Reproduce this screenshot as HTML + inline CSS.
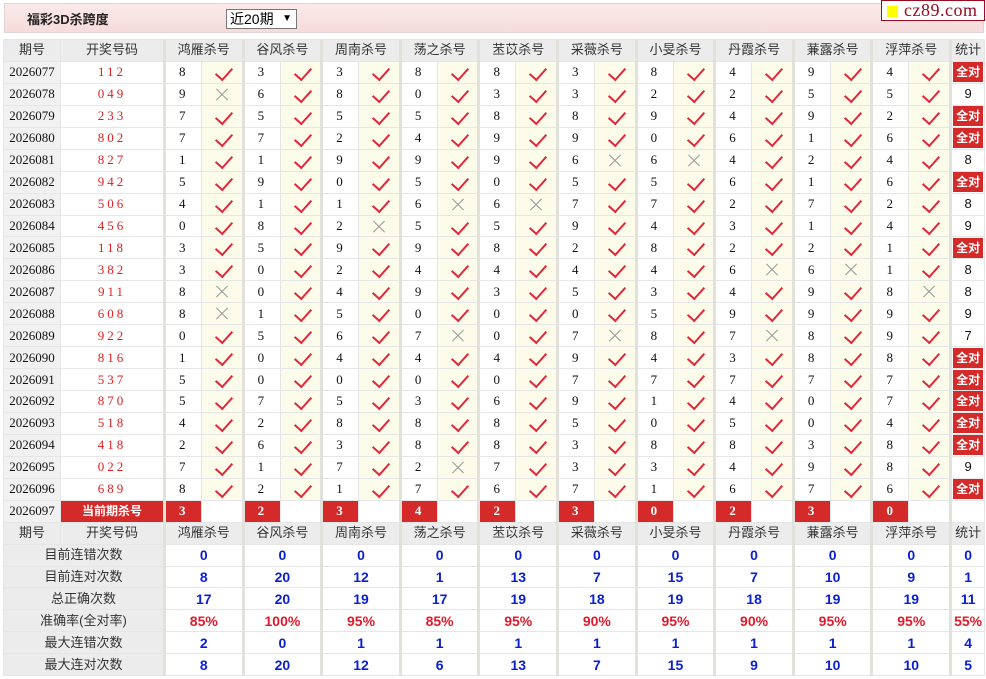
<!DOCTYPE html>
<html><head><meta charset="utf-8">
<style>
*{margin:0;padding:0;box-sizing:border-box}
body{width:986px;height:679px;background:#fff;font-family:"Liberation Sans","Noto Sans CJK SC",sans-serif;position:relative;overflow:hidden}
.top{position:absolute;left:4px;top:3px;width:980px;height:30px;background:linear-gradient(#fbe9e9,#f6dcdc);border:1px solid #e4d4d4}
.title{position:absolute;left:22px;top:5px;font-size:13px;font-weight:bold;color:#222}
.sel{position:absolute;left:221px;top:5px;width:71px;height:20px;border:1px solid #777;background:#fff;font-size:14px;padding-left:3px;line-height:18px;color:#000}
.sel span{position:absolute;right:4px;top:0;font-size:10px}
.logo{position:absolute;left:881px;top:0;width:104px;height:21px;border:1px solid #9a0a20;background:#fff;font-family:"Liberation Serif",serif;font-size:18px;color:#9a0a20;line-height:19px;padding-left:22px;letter-spacing:0.5px}
.logo i{position:absolute;left:5px;top:5px;width:11px;height:11px;background:#ffff00}
table{position:absolute;left:3px;top:39px;width:981px;border-collapse:collapse;table-layout:fixed}
tr{height:21.95px}
td{border:1px solid #e6e6e6;font-size:13px;text-align:center;vertical-align:middle;padding:0;color:#111;white-space:nowrap;overflow:hidden;line-height:16px}
tr.h td{background:#ececec;color:#333}
td.q{background:#f1f1f1;font-family:"Liberation Serif",serif;font-size:13px}
td.d{color:#e02020;font-family:"Liberation Serif",serif;letter-spacing:3px}
td.n{font-family:"Liberation Serif",serif;text-align:left;padding-left:13px;border-left:3px solid #e3e1dc}
td.g{border-left:3px solid #e3e1dc}
td.t{border-left:3px solid #e3e1dc}
td.y,td.x,td.w{background:#fdfbea;position:relative}
td.w{background:#fff}
td.y::after{content:"";position:absolute;left:17px;top:2px;width:8px;height:14px;border-right:2px solid #e0283a;border-bottom:2px solid #e0283a;transform:rotate(42deg)}
td.x::before,td.x::after{content:"";position:absolute;left:12px;top:10px;width:16px;height:1px;background:#999;transform:rotate(45deg)}
td.x::after{transform:rotate(-45deg)}
td.t b{display:block;background:#d42a2a;color:#fff;font-size:12px;height:20px;line-height:20px;margin:0 1px}
td.r{background:#d42a2a;color:#fff;font-weight:bold;font-family:"Liberation Serif",serif;text-align:left;padding-left:13px;border-left:3px solid #e3e1dc}
td.cur{background:#d42a2a;color:#fff;font-weight:bold;font-size:12px}
td.l{background:#ececec;color:#333}
td.v{color:#0a1fd0;font-weight:bold;font-size:14px;border-left:3px solid #e3e1dc}
td.p{color:#e01a2a;font-weight:bold;font-size:14px;border-left:3px solid #e3e1dc}
</style></head><body>
<div class="top"><div class="title">福彩3D杀跨度</div><div class="sel">近20期<span>&#9660;</span></div></div>
<div class="logo"><i></i>cz89.com</div>
<table>
<colgroup><col style="width:57px"><col style="width:104px">
<col style="width:37px"><col style="width:41.6px"><col style="width:37px"><col style="width:41.6px"><col style="width:37px"><col style="width:41.6px"><col style="width:37px"><col style="width:41.6px"><col style="width:37px"><col style="width:41.6px"><col style="width:37px"><col style="width:41.6px"><col style="width:37px"><col style="width:41.6px"><col style="width:37px"><col style="width:41.6px"><col style="width:37px"><col style="width:41.6px"><col style="width:37px"><col style="width:41.6px">
<col style="width:34px"></colgroup>
<tr class="h"><td>期号</td><td>开奖号码</td><td colspan="2" class="g">鸿雁杀号</td><td colspan="2" class="g">谷风杀号</td><td colspan="2" class="g">周南杀号</td><td colspan="2" class="g">荡之杀号</td><td colspan="2" class="g">苤苡杀号</td><td colspan="2" class="g">采薇杀号</td><td colspan="2" class="g">小旻杀号</td><td colspan="2" class="g">丹霞杀号</td><td colspan="2" class="g">蒹露杀号</td><td colspan="2" class="g">浮萍杀号</td><td class="g">统计</td></tr>
<tr><td class="q">2026077</td><td class="d">112</td><td class="n">8</td><td class="y"></td><td class="n">3</td><td class="y"></td><td class="n">3</td><td class="y"></td><td class="n">8</td><td class="y"></td><td class="n">8</td><td class="y"></td><td class="n">3</td><td class="y"></td><td class="n">8</td><td class="y"></td><td class="n">4</td><td class="y"></td><td class="n">9</td><td class="y"></td><td class="n">4</td><td class="y"></td><td class="t"><b>全对</b></td></tr>
<tr><td class="q">2026078</td><td class="d">049</td><td class="n">9</td><td class="x"></td><td class="n">6</td><td class="y"></td><td class="n">8</td><td class="y"></td><td class="n">0</td><td class="y"></td><td class="n">3</td><td class="y"></td><td class="n">3</td><td class="y"></td><td class="n">2</td><td class="y"></td><td class="n">2</td><td class="y"></td><td class="n">5</td><td class="y"></td><td class="n">5</td><td class="y"></td><td class="t">9</td></tr>
<tr><td class="q">2026079</td><td class="d">233</td><td class="n">7</td><td class="y"></td><td class="n">5</td><td class="y"></td><td class="n">5</td><td class="y"></td><td class="n">5</td><td class="y"></td><td class="n">8</td><td class="y"></td><td class="n">8</td><td class="y"></td><td class="n">9</td><td class="y"></td><td class="n">4</td><td class="y"></td><td class="n">9</td><td class="y"></td><td class="n">2</td><td class="y"></td><td class="t"><b>全对</b></td></tr>
<tr><td class="q">2026080</td><td class="d">802</td><td class="n">7</td><td class="y"></td><td class="n">7</td><td class="y"></td><td class="n">2</td><td class="y"></td><td class="n">4</td><td class="y"></td><td class="n">9</td><td class="y"></td><td class="n">9</td><td class="y"></td><td class="n">0</td><td class="y"></td><td class="n">6</td><td class="y"></td><td class="n">1</td><td class="y"></td><td class="n">6</td><td class="y"></td><td class="t"><b>全对</b></td></tr>
<tr><td class="q">2026081</td><td class="d">827</td><td class="n">1</td><td class="y"></td><td class="n">1</td><td class="y"></td><td class="n">9</td><td class="y"></td><td class="n">9</td><td class="y"></td><td class="n">9</td><td class="y"></td><td class="n">6</td><td class="x"></td><td class="n">6</td><td class="x"></td><td class="n">4</td><td class="y"></td><td class="n">2</td><td class="y"></td><td class="n">4</td><td class="y"></td><td class="t">8</td></tr>
<tr><td class="q">2026082</td><td class="d">942</td><td class="n">5</td><td class="y"></td><td class="n">9</td><td class="y"></td><td class="n">0</td><td class="y"></td><td class="n">5</td><td class="y"></td><td class="n">0</td><td class="y"></td><td class="n">5</td><td class="y"></td><td class="n">5</td><td class="y"></td><td class="n">6</td><td class="y"></td><td class="n">1</td><td class="y"></td><td class="n">6</td><td class="y"></td><td class="t"><b>全对</b></td></tr>
<tr><td class="q">2026083</td><td class="d">506</td><td class="n">4</td><td class="y"></td><td class="n">1</td><td class="y"></td><td class="n">1</td><td class="y"></td><td class="n">6</td><td class="x"></td><td class="n">6</td><td class="x"></td><td class="n">7</td><td class="y"></td><td class="n">7</td><td class="y"></td><td class="n">2</td><td class="y"></td><td class="n">7</td><td class="y"></td><td class="n">2</td><td class="y"></td><td class="t">8</td></tr>
<tr><td class="q">2026084</td><td class="d">456</td><td class="n">0</td><td class="y"></td><td class="n">8</td><td class="y"></td><td class="n">2</td><td class="x"></td><td class="n">5</td><td class="y"></td><td class="n">5</td><td class="y"></td><td class="n">9</td><td class="y"></td><td class="n">4</td><td class="y"></td><td class="n">3</td><td class="y"></td><td class="n">1</td><td class="y"></td><td class="n">4</td><td class="y"></td><td class="t">9</td></tr>
<tr><td class="q">2026085</td><td class="d">118</td><td class="n">3</td><td class="y"></td><td class="n">5</td><td class="y"></td><td class="n">9</td><td class="y"></td><td class="n">9</td><td class="y"></td><td class="n">8</td><td class="y"></td><td class="n">2</td><td class="y"></td><td class="n">8</td><td class="y"></td><td class="n">2</td><td class="y"></td><td class="n">2</td><td class="y"></td><td class="n">1</td><td class="y"></td><td class="t"><b>全对</b></td></tr>
<tr><td class="q">2026086</td><td class="d">382</td><td class="n">3</td><td class="y"></td><td class="n">0</td><td class="y"></td><td class="n">2</td><td class="y"></td><td class="n">4</td><td class="y"></td><td class="n">4</td><td class="y"></td><td class="n">4</td><td class="y"></td><td class="n">4</td><td class="y"></td><td class="n">6</td><td class="x"></td><td class="n">6</td><td class="x"></td><td class="n">1</td><td class="y"></td><td class="t">8</td></tr>
<tr><td class="q">2026087</td><td class="d">911</td><td class="n">8</td><td class="x"></td><td class="n">0</td><td class="y"></td><td class="n">4</td><td class="y"></td><td class="n">9</td><td class="y"></td><td class="n">3</td><td class="y"></td><td class="n">5</td><td class="y"></td><td class="n">3</td><td class="y"></td><td class="n">4</td><td class="y"></td><td class="n">9</td><td class="y"></td><td class="n">8</td><td class="x"></td><td class="t">8</td></tr>
<tr><td class="q">2026088</td><td class="d">608</td><td class="n">8</td><td class="x"></td><td class="n">1</td><td class="y"></td><td class="n">5</td><td class="y"></td><td class="n">0</td><td class="y"></td><td class="n">0</td><td class="y"></td><td class="n">0</td><td class="y"></td><td class="n">5</td><td class="y"></td><td class="n">9</td><td class="y"></td><td class="n">9</td><td class="y"></td><td class="n">9</td><td class="y"></td><td class="t">9</td></tr>
<tr><td class="q">2026089</td><td class="d">922</td><td class="n">0</td><td class="y"></td><td class="n">5</td><td class="y"></td><td class="n">6</td><td class="y"></td><td class="n">7</td><td class="x"></td><td class="n">0</td><td class="y"></td><td class="n">7</td><td class="x"></td><td class="n">8</td><td class="y"></td><td class="n">7</td><td class="x"></td><td class="n">8</td><td class="y"></td><td class="n">9</td><td class="y"></td><td class="t">7</td></tr>
<tr><td class="q">2026090</td><td class="d">816</td><td class="n">1</td><td class="y"></td><td class="n">0</td><td class="y"></td><td class="n">4</td><td class="y"></td><td class="n">4</td><td class="y"></td><td class="n">4</td><td class="y"></td><td class="n">9</td><td class="y"></td><td class="n">4</td><td class="y"></td><td class="n">3</td><td class="y"></td><td class="n">8</td><td class="y"></td><td class="n">8</td><td class="y"></td><td class="t"><b>全对</b></td></tr>
<tr><td class="q">2026091</td><td class="d">537</td><td class="n">5</td><td class="y"></td><td class="n">0</td><td class="y"></td><td class="n">0</td><td class="y"></td><td class="n">0</td><td class="y"></td><td class="n">0</td><td class="y"></td><td class="n">7</td><td class="y"></td><td class="n">7</td><td class="y"></td><td class="n">7</td><td class="y"></td><td class="n">7</td><td class="y"></td><td class="n">7</td><td class="y"></td><td class="t"><b>全对</b></td></tr>
<tr><td class="q">2026092</td><td class="d">870</td><td class="n">5</td><td class="y"></td><td class="n">7</td><td class="y"></td><td class="n">5</td><td class="y"></td><td class="n">3</td><td class="y"></td><td class="n">6</td><td class="y"></td><td class="n">9</td><td class="y"></td><td class="n">1</td><td class="y"></td><td class="n">4</td><td class="y"></td><td class="n">0</td><td class="y"></td><td class="n">7</td><td class="y"></td><td class="t"><b>全对</b></td></tr>
<tr><td class="q">2026093</td><td class="d">518</td><td class="n">4</td><td class="y"></td><td class="n">2</td><td class="y"></td><td class="n">8</td><td class="y"></td><td class="n">8</td><td class="y"></td><td class="n">8</td><td class="y"></td><td class="n">5</td><td class="y"></td><td class="n">0</td><td class="y"></td><td class="n">5</td><td class="y"></td><td class="n">0</td><td class="y"></td><td class="n">4</td><td class="y"></td><td class="t"><b>全对</b></td></tr>
<tr><td class="q">2026094</td><td class="d">418</td><td class="n">2</td><td class="y"></td><td class="n">6</td><td class="y"></td><td class="n">3</td><td class="y"></td><td class="n">8</td><td class="y"></td><td class="n">8</td><td class="y"></td><td class="n">3</td><td class="y"></td><td class="n">8</td><td class="y"></td><td class="n">8</td><td class="y"></td><td class="n">3</td><td class="y"></td><td class="n">8</td><td class="y"></td><td class="t"><b>全对</b></td></tr>
<tr><td class="q">2026095</td><td class="d">022</td><td class="n">7</td><td class="y"></td><td class="n">1</td><td class="y"></td><td class="n">7</td><td class="y"></td><td class="n">2</td><td class="x"></td><td class="n">7</td><td class="y"></td><td class="n">3</td><td class="y"></td><td class="n">3</td><td class="y"></td><td class="n">4</td><td class="y"></td><td class="n">9</td><td class="y"></td><td class="n">8</td><td class="y"></td><td class="t">9</td></tr>
<tr><td class="q">2026096</td><td class="d">689</td><td class="n">8</td><td class="y"></td><td class="n">2</td><td class="y"></td><td class="n">1</td><td class="y"></td><td class="n">7</td><td class="y"></td><td class="n">6</td><td class="y"></td><td class="n">7</td><td class="y"></td><td class="n">1</td><td class="y"></td><td class="n">6</td><td class="y"></td><td class="n">7</td><td class="y"></td><td class="n">6</td><td class="y"></td><td class="t"><b>全对</b></td></tr>
<tr><td class="q">2026097</td><td class="cur">当前期杀号</td><td class="r">3</td><td class="w"></td><td class="r">2</td><td class="w"></td><td class="r">3</td><td class="w"></td><td class="r">4</td><td class="w"></td><td class="r">2</td><td class="w"></td><td class="r">3</td><td class="w"></td><td class="r">0</td><td class="w"></td><td class="r">2</td><td class="w"></td><td class="r">3</td><td class="w"></td><td class="r">0</td><td class="w"></td><td class="t"></td></tr>
<tr class="h"><td>期号</td><td>开奖号码</td><td colspan="2" class="g">鸿雁杀号</td><td colspan="2" class="g">谷风杀号</td><td colspan="2" class="g">周南杀号</td><td colspan="2" class="g">荡之杀号</td><td colspan="2" class="g">苤苡杀号</td><td colspan="2" class="g">采薇杀号</td><td colspan="2" class="g">小旻杀号</td><td colspan="2" class="g">丹霞杀号</td><td colspan="2" class="g">蒹露杀号</td><td colspan="2" class="g">浮萍杀号</td><td class="g">统计</td></tr>
<tr><td colspan="2" class="l">目前连错次数</td><td colspan="2" class="v">0</td><td colspan="2" class="v">0</td><td colspan="2" class="v">0</td><td colspan="2" class="v">0</td><td colspan="2" class="v">0</td><td colspan="2" class="v">0</td><td colspan="2" class="v">0</td><td colspan="2" class="v">0</td><td colspan="2" class="v">0</td><td colspan="2" class="v">0</td><td class="v">0</td></tr>
<tr><td colspan="2" class="l">目前连对次数</td><td colspan="2" class="v">8</td><td colspan="2" class="v">20</td><td colspan="2" class="v">12</td><td colspan="2" class="v">1</td><td colspan="2" class="v">13</td><td colspan="2" class="v">7</td><td colspan="2" class="v">15</td><td colspan="2" class="v">7</td><td colspan="2" class="v">10</td><td colspan="2" class="v">9</td><td class="v">1</td></tr>
<tr><td colspan="2" class="l">总正确次数</td><td colspan="2" class="v">17</td><td colspan="2" class="v">20</td><td colspan="2" class="v">19</td><td colspan="2" class="v">17</td><td colspan="2" class="v">19</td><td colspan="2" class="v">18</td><td colspan="2" class="v">19</td><td colspan="2" class="v">18</td><td colspan="2" class="v">19</td><td colspan="2" class="v">19</td><td class="v">11</td></tr>
<tr><td colspan="2" class="l">准确率(全对率)</td><td colspan="2" class="p">85%</td><td colspan="2" class="p">100%</td><td colspan="2" class="p">95%</td><td colspan="2" class="p">85%</td><td colspan="2" class="p">95%</td><td colspan="2" class="p">90%</td><td colspan="2" class="p">95%</td><td colspan="2" class="p">90%</td><td colspan="2" class="p">95%</td><td colspan="2" class="p">95%</td><td class="p">55%</td></tr>
<tr><td colspan="2" class="l">最大连错次数</td><td colspan="2" class="v">2</td><td colspan="2" class="v">0</td><td colspan="2" class="v">1</td><td colspan="2" class="v">1</td><td colspan="2" class="v">1</td><td colspan="2" class="v">1</td><td colspan="2" class="v">1</td><td colspan="2" class="v">1</td><td colspan="2" class="v">1</td><td colspan="2" class="v">1</td><td class="v">4</td></tr>
<tr><td colspan="2" class="l">最大连对次数</td><td colspan="2" class="v">8</td><td colspan="2" class="v">20</td><td colspan="2" class="v">12</td><td colspan="2" class="v">6</td><td colspan="2" class="v">13</td><td colspan="2" class="v">7</td><td colspan="2" class="v">15</td><td colspan="2" class="v">9</td><td colspan="2" class="v">10</td><td colspan="2" class="v">10</td><td class="v">5</td></tr>
</table>
</body></html>
